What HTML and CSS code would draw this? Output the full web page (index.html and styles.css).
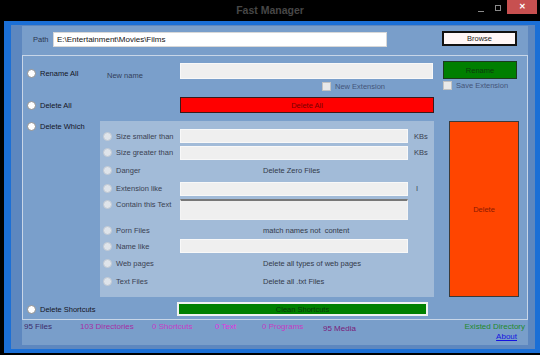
FILE: index.html
```html
<!DOCTYPE html>
<html>
<head>
  <meta charset="utf-8">
  <link rel="stylesheet" href="styles.css">
</head>
<body>
  <div class="titlebar">
    <span></span>
    <span class="title">Fast Manager</span>
    <div class="controls">
      <span class="min"></span>
      <span class="max"></span>
      <span class="close">&#x2715;</span>
    </div>
  </div>

  <div class="frame">
    <div class="client">
      <div class="inner">

        <div class="pathrow">
          <span class="path-label">Path</span>
          <input class="path-input" value="E:\Entertainment\Movies\Films" readonly>
          <button class="browse">Browse</button>
        </div>

        <div class="group">
          <!-- rename -->
          <div class="row row-rename">
            <label class="opt"><span class="radio"></span>Rename All</label>
            <div class="mid">
              <div class="name-line">
                <span class="name-label">New name</span>
                <input class="field name-field" readonly>
              </div>
              <label class="check new-ext"><span class="box"></span>New Extension</label>
            </div>
            <div class="side">
              <button class="btn-rename">Rename</button>
              <label class="check"><span class="box"></span>Save Extension</label>
            </div>
          </div>

          <!-- delete all -->
          <div class="row row-delall">
            <label class="opt"><span class="radio"></span>Delete All</label>
            <div class="mid">
              <button class="btn-delall">Delete All</button>
            </div>
            <div class="side"></div>
          </div>

          <!-- delete which -->
          <div class="row row-which">
            <label class="opt opt-top"><span class="radio"></span>Delete Which</label>
            <div class="panel">
              <label class="sub"><span class="radio off"></span>Size smaller than</label>
              <input class="field" readonly>
              <span class="unit">KBs</span>

              <label class="sub"><span class="radio off"></span>Size greater than</label>
              <input class="field" readonly>
              <span class="unit">KBs</span>

              <label class="sub"><span class="radio off"></span>Danger</label>
              <span class="note">Delete Zero Files</span>
              <span></span>

              <label class="sub"><span class="radio off"></span>Extension like</label>
              <input class="field" readonly>
              <span class="unit unit-i">I</span>

              <label class="sub sub-top"><span class="radio off"></span>Contain this Text</label>
              <textarea class="area" readonly></textarea>
              <span></span>

              <label class="sub"><span class="radio off"></span>Porn Files</label>
              <span class="note">match names not &nbsp;content</span>
              <span></span>

              <label class="sub"><span class="radio off"></span>Name like</label>
              <input class="field" readonly>
              <span></span>

              <label class="sub"><span class="radio off"></span>Web pages</label>
              <span class="note">Delete all types of web pages</span>
              <span></span>

              <label class="sub"><span class="radio off"></span>Text Files</label>
              <span class="note">Delete all .txt Files</span>
              <span></span>
            </div>
            <div class="side">
              <button class="btn-delete">Delete</button>
            </div>
          </div>

          <!-- shortcuts -->
          <div class="row row-short">
            <label class="opt"><span class="radio"></span>Delete Shortcuts</label>
            <div class="mid">
              <button class="btn-clean">Clean Shortcuts</button>
            </div>
            <div class="side"></div>
          </div>
        </div>

        <div class="status">
          <span class="st files">95 Files</span>
          <span class="st dirs">103 Directories</span>
          <span class="st shorts">0 Shortcuts</span>
          <span class="st texts">0 Text</span>
          <span class="st progs">0 Programs</span>
          <span class="st media">95 Media</span>
          <div class="status-right">
            <span class="existed">Existed Directory</span>
            <a class="about" href="#">About</a>
          </div>
        </div>

      </div>
    </div>
  </div>
</body>
</html>
```

FILE: styles.css
```css
* {
  box-sizing: border-box;
}
body {
  margin: 0;
  width: 540px;
  height: 355px;
  overflow: hidden;
  background-color: #000;
  font-family: "Liberation Sans", Arial, sans-serif;
  font-size: 7.5px;
  color: #1c1c2a;
}

/* window chrome */
.titlebar {
  height: 21px;
  display: grid;
  grid-template-columns: 1fr auto 1fr;
}
.title {
  font-size: 10.5px;
  font-weight: bold;
  color: #474747;
  line-height: 20px;
}
.controls {
  display: flex;
  justify-content: flex-end;
  align-items: flex-start;
  padding-right: 3px;
}
.min {
  width: 6px;
  height: 1px;
  margin-top: 11px;
  background: #8a8a8a;
}
.max {
  width: 6px;
  height: 6px;
  margin: 5px 0 0 11px;
  border: 1px solid #8a8a8a;
}
.close {
  width: 30px;
  height: 14px;
  margin-left: 6px;
  background: #c75050;
  color: #fff;
  font-size: 8px;
  font-weight: bold;
  text-align: center;
  line-height: 14px;
}
.frame {
  margin-left: 4px;
  width: 536px;
  height: 332px;
  padding: 4px 5px 4px 7px;
  background: #1b6fd6;
}
.client {
  height: 100%;
  padding: 1px 7px 4px 11px;
  background: #5d87bf;
}
.inner {
  height: 100%;
  background: #799eca;
}

/* path */
.pathrow {
  height: 29px;
  display: flex;
  align-items: flex-start;
  padding: 6px 0 0 11px;
}
.path-label {
  width: 20px;
  line-height: 16px;
  color: #2a3550;
}
.path-input {
  width: 334px;
  height: 15px;
  padding: 0 3px;
  border: 1px solid #d8d8d8;
  background: #fff;
  font-family: inherit;
  font-size: 8px;
  color: #111;
  outline: none;
}
.browse {
  width: 75px;
  height: 15px;
  margin: -1px 0 0 55px;
  padding: 0;
  border: 2px solid #111;
  background: #fff7f7;
  font-family: inherit;
  font-size: 7.5px;
  color: #222;
}

/* group box */
.group {
  height: 265px;
  border: 1px solid #c8d6e8;
  background: #7a9fcb;
  padding-top: 5px;
}
.row {
  display: grid;
  grid-template-columns: 77px 334px 93px;
}
.row-rename { height: 28px; }
.row-delall { height: 16px; margin-top: 8px; align-items: center; }
.row-which { height: 176px; margin-top: 8px; }
.row-short { height: 14px; margin-top: 5px; align-items: center; }

.opt {
  display: flex;
  align-items: center;
  gap: 4px;
  height: 10px;
  padding-left: 4px;
  color: #14141e;
}
.row-rename .opt { margin-top: 7px; }
.opt-top { margin-top: 0; align-self: start; }
.radio {
  width: 9px;
  height: 9px;
  border-radius: 50%;
  border: 1px solid #8e8e8e;
  background: #fff;
  flex: none;
}
.radio.off {
  border-color: #c2c9d3;
  background: #dfe4ea;
}

.name-line {
  display: flex;
  padding-top: 2px;
}
.name-label {
  width: 80px;
  padding: 8px 0 0 7px;
  color: #33405a;
}
.field {
  height: 14px;
  border: 1px solid #f8f8f8;
  background: #efefef;
  outline: none;
  padding: 0;
}
.name-field {
  width: 253px;
  height: 16px;
}
.check {
  display: flex;
  align-items: center;
  gap: 4px;
  height: 9px;
  margin-top: 2px;
  color: #44557a;
}
.new-ext { margin-left: 222px; }
.box {
  width: 9px;
  height: 9px;
  border: 1px solid #c2c2c2;
  background: #e9e9e9;
}
.side {
  padding-left: 9px;
}
.btn-rename {
  display: block;
  width: 74px;
  height: 18px;
  padding: 0;
  border: 1px solid #1d3a1d;
  background: #007f00;
  font-family: inherit;
  font-size: 7.5px;
  color: #0d3a0d;
}

.btn-delall {
  display: block;
  margin-left: 80px;
  width: 254px;
  height: 16px;
  padding: 0;
  border: 1px solid #3a1a1a;
  background: #ff0000;
  font-family: inherit;
  font-size: 7.5px;
  color: #7a0000;
}

/* delete which panel */
.panel {
  background: #a2bbd8;
  display: grid;
  grid-template-columns: 80px 228px 26px;
  grid-template-rows: 16px 17px 19px 17px 26px 15px 16px 19px 16px;
  padding-top: 7px;
  align-items: center;
}
.sub {
  display: flex;
  align-items: center;
  gap: 4px;
  padding-left: 3px;
  color: #3a4152;
}
.sub-top {
  align-self: start;
  margin-top: 3px;
}
.panel .field {
  width: 228px;
}
.area {
  align-self: start;
  margin-top: 2px;
  width: 228px;
  height: 21px;
  resize: none;
  border: 1px solid #f4f4f4;
  border-top: 2px solid #777;
  background: #efefef;
  outline: none;
  padding: 0;
}
.note {
  padding-left: 83px;
  color: #333a4a;
  white-space: nowrap;
}
.unit {
  padding-left: 6px;
  color: #3a4152;
}
.unit-i { padding-left: 8px; }

.row-which .side {
  padding-left: 15px;
}
.btn-delete {
  display: block;
  width: 70px;
  height: 176px;
  padding: 0;
  border: 1px solid #3a3a3a;
  background: #ff4500;
  font-family: inherit;
  font-size: 7.5px;
  color: #8a1a00;
}

.btn-clean {
  display: block;
  margin-left: 77px;
  width: 251px;
  height: 14px;
  padding: 0;
  border: 2px solid #f0f2f0;
  background: #008000;
  font-family: inherit;
  font-size: 7.5px;
  color: #0b3a0b;
}

/* status */
.status {
  display: flex;
  padding: 2px 3px 0 2px;
  font-size: 8px;
  line-height: 10px;
}
.st { flex: none; }
.files { width: 56px; color: #3b2b6b; }
.dirs { width: 72px; color: #a52ea5; }
.shorts { width: 63px; color: #c83ac8; }
.texts { width: 47px; color: #e032e0; }
.progs { width: 61px; color: #c43cc4; }
.media { padding-top: 2px; color: #7a1c7a; }
.status-right {
  margin-left: auto;
  display: flex;
  flex-direction: column;
  align-items: flex-end;
}
.existed { color: #1f8a2a; }
.about {
  margin-right: 8px;
  color: #1414e0;
  text-decoration: underline;
}
```
